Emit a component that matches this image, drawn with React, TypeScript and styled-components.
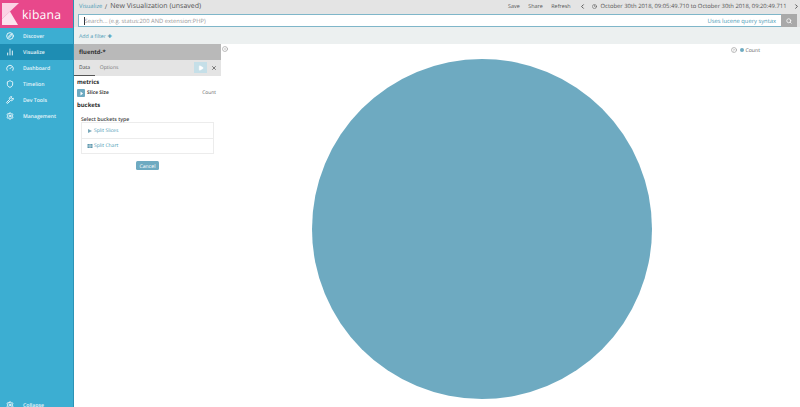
import React from "react";
import styled, { createGlobalStyle } from "styled-components";
import {
  BarChart2,
  ChevronLeft,
  ChevronRight,
  CircleChevronLeft,
  CircleChevronRight,
  Clock,
  Compass,
  Gauge,
  Play,
  Search,
  Settings,
  Shield,
  Wrench,
  X,
} from "lucide-react";

const GlobalStyle = createGlobalStyle`
  html, body {
    margin: 0;
    padding: 0;
    width: 800px;
    height: 407px;
    overflow: hidden;
    background: #fff;
    font-family: "Open Sans", "Liberation Sans", sans-serif;
    text-rendering: geometricPrecision;
  }
  * { box-sizing: border-box; }
`;

const Page = styled.div`
  display: flex;
  width: 800px;
  height: 407px;
  overflow: hidden;
`;

const Sidebar = styled.nav`
  width: 74px;
  flex: none;
  height: 407px;
  background: #3caed2;
  border-right: 1px solid #2c93b6;
  display: flex;
  flex-direction: column;
`;

const Logo = styled.div`
  height: 28px;
  background: #e8488b;
  display: flex;
  align-items: center;
  gap: 3px;
  padding-left: 1px;
  color: #fff;
  font-size: 12.2px;
  letter-spacing: 0.2px;
`;

const NavItem = styled.div<{ $active?: boolean }>`
  height: 16px;
  display: flex;
  align-items: center;
  gap: 9px;
  padding-left: 6px;
  background: ${(p) => (p.$active ? "#1e8db3" : "transparent")};
  color: #e6f5fa;
  font-size: 5.15px;
  font-weight: 600;
`;

const Collapse = styled(NavItem)`
  margin-top: auto;
  margin-bottom: -6px;
`;

const Content = styled.div`
  flex: 1;
  min-width: 0;
  display: flex;
  flex-direction: column;
`;

const TopBar = styled.div`
  height: 12px;
  background: #e4e4e4;
  display: flex;
  align-items: center;
  padding: 0 0.5px 0 5px;
  font-size: 5.4px;
  color: #555;
`;

const Crumb = styled.span`
  font-size: 5.8px;
  color: #4a9ab5;
`;

const CrumbSeparator = styled.span`
  font-size: 6.5px;
  margin: 0 3px 0 2.5px;
`;

const CrumbTitle = styled.span`
  font-size: 7px;
`;

const TopActions = styled.div`
  margin-left: auto;
  display: flex;
  align-items: center;
  gap: 8.5px;
`;

const TimeNav = styled.div`
  display: flex;
  align-items: center;
  gap: 6px;
`;

const TimeRange = styled.span`
  display: flex;
  align-items: center;
  gap: 3.5px;
  font-size: 5.85px;
`;

const SearchRow = styled.div`
  height: 15px;
  background: #e4e4e4;
  display: flex;
  align-items: flex-end;
  padding-left: 4px;
`;

const SearchBox = styled.div`
  flex: 1;
  height: 13px;
  background: #fff;
  border: 1px solid #7fb6c9;
  border-right: none;
  display: flex;
  align-items: center;
  padding: 0 5px 0 5px;
  font-size: 5.8px;
  color: #9a9a9a;
`;

const Caret = styled.span`
  width: 0.5px;
  height: 8px;
  background: #333;
`;

const SyntaxLink = styled.span`
  margin-left: auto;
  color: #4a9ab5;
`;

const SearchButton = styled.div`
  width: 16px;
  height: 13px;
  margin-right: 3px;
  background: #a9a9a9;
  display: flex;
  align-items: center;
  justify-content: center;
  color: #fff;
`;

const FilterRow = styled.div`
  height: 17px;
  background: #ecf0f0;
  display: flex;
  align-items: center;
  padding-left: 5px;
  font-size: 5.3px;
  color: #4a9ab5;
`;

const Workspace = styled.div`
  flex: 1;
  min-height: 0;
  display: flex;
`;

const Editor = styled.div`
  width: 147px;
  flex: none;
  display: flex;
  flex-direction: column;
`;

const IndexTitle = styled.div`
  height: 16px;
  background: #b9b9b9;
  display: flex;
  align-items: center;
  padding-left: 5px;
  font-size: 5.9px;
  font-weight: 700;
  color: #333;
`;

const TabBar = styled.div`
  height: 16px;
  background: #e4e4e4;
  display: flex;
  align-items: stretch;
  font-size: 5.1px;
`;

const Tab = styled.div<{ $active?: boolean }>`
  display: flex;
  align-items: center;
  padding: 0 4.5px 0 5px;
  margin-right: ${(p) => (p.$active ? "0" : "auto")};
  color: ${(p) => (p.$active ? "#444" : "#777")};
  border-bottom: ${(p) => (p.$active ? "1px solid #555" : "none")};
`;

const RunButton = styled.div`
  width: 13px;
  margin: 2px 0 3px;
  background: #c5dfe8;
  display: flex;
  align-items: center;
  justify-content: center;
  color: #fff;
`;

const DiscardButton = styled.div`
  width: 14px;
  display: flex;
  align-items: center;
  justify-content: center;
  color: #555;
`;

const SectionTitle = styled.div`
  height: 11px;
  display: flex;
  align-items: center;
  padding-left: 3px;
  font-size: 5.9px;
  font-weight: 700;
  color: #2d2d2d;
`;

const MetricRow = styled.div`
  height: 12px;
  display: flex;
  align-items: center;
  gap: 2px;
  padding: 0 5px 0 3px;
  font-size: 4.9px;
  color: #444;
`;

const MetricToggle = styled.div`
  width: 8px;
  height: 8.5px;
  border-radius: 1px;
  background: #6eaac1;
  display: flex;
  align-items: center;
  justify-content: center;
  color: #fff;
`;

const MetricName = styled.span`
  font-weight: 700;
`;

const MetricValue = styled.span`
  margin-left: auto;
  color: #666;
`;

const BucketBlock = styled.div`
  padding: 5px 7px 0 7px;
`;

const BucketLabel = styled.div`
  height: 7px;
  display: flex;
  align-items: center;
  font-size: 5.2px;
  font-weight: 600;
  color: #444;
`;

const BucketList = styled.div`
  height: 32px;
  border: 1px solid #ececec;
`;

const BucketOption = styled.div`
  height: 15px;
  display: flex;
  align-items: center;
  gap: 0;
  padding-left: 5px;
  font-size: 5px;
  color: #4a9ab5;
  & + & {
    border-top: 1px solid #ececec;
  }
`;

const CancelRow = styled.div`
  display: flex;
  justify-content: center;
  margin-top: 7px;
`;

const CancelButton = styled.div`
  width: 23px;
  height: 9px;
  border-radius: 1.5px;
  background: #6eaac1;
  color: #fff;
  font-size: 5.2px;
  display: flex;
  align-items: center;
  justify-content: center;
`;

const ChartArea = styled.div`
  flex: 1;
  min-width: 0;
  position: relative;
  padding: 15px 0 0 91px;
`;

const CollapseToggle = styled.div`
  position: absolute;
  left: 1px;
  top: 2px;
  color: #999;
  display: flex;
`;

const Legend = styled.div`
  position: absolute;
  right: 40px;
  top: 2px;
  display: flex;
  align-items: center;
  gap: 1px;
  font-size: 5.2px;
  color: #666;
`;

const LegendToggle = styled.span`
  display: flex;
  margin-right: 2px;
  color: #999;
`;

const LegendDot = styled.span`
  width: 4px;
  height: 4px;
  border-radius: 50%;
  background: #6eaac1;
`;

const PieSvg = styled.svg`
  display: block;
`;

const ArrowIcon = () => (
  <svg width="5" height="5" viewBox="0 0 10 10">
    <path d="M3 1l5 4-5 4z" fill="currentColor" />
  </svg>
);

const KibanaMark = () => (
  <svg width="18" height="22" viewBox="0 0 18 22">
    <path d="M1 0h17L1 16z" fill="#fbd3e4" />
    <path d="M1 16L9 8.5l8 13.5H1z" fill="#fff" opacity="0.85" />
  </svg>
);

const SlicesIcon = () => (
  <svg width="7" height="6" viewBox="0 0 7 6">
    <path d="M1 1l4 2-4 2z" fill="#7aa9bb" />
  </svg>
);

const ChartIcon = () => (
  <svg width="7" height="6" viewBox="0 0 7 6">
    <path d="M0.5 1h5v4h-5z" fill="#5e98ae" />
    <path d="M0.5 3h5M3 1v4" stroke="#fff" strokeWidth="0.5" />
  </svg>
);

const navItems = [
  { label: "Discover", icon: Compass },
  { label: "Visualize", icon: BarChart2, active: true },
  { label: "Dashboard", icon: Gauge },
  { label: "Timelion", icon: Shield },
  { label: "Dev Tools", icon: Wrench },
  { label: "Management", icon: Settings },
];

export default function App() {
  return (
    <Page>
      <GlobalStyle />
      <Sidebar>
        <Logo>
          <KibanaMark />
          kibana
        </Logo>
        {navItems.map((item) => (
          <NavItem key={item.label} $active={item.active}>
            <item.icon size={8} strokeWidth={2.6} color="#fff" />
            {item.label}
          </NavItem>
        ))}
        <Collapse>
          <Settings size={8} strokeWidth={2.6} color="#fff" />
          Collapse
        </Collapse>
      </Sidebar>
      <Content>
        <TopBar>
          <Crumb>Visualize</Crumb>
          <CrumbSeparator>/</CrumbSeparator>
          <CrumbTitle>New Visualization (unsaved)</CrumbTitle>
          <TopActions>
            <span>Save</span>
            <span>Share</span>
            <span>Refresh</span>
            <TimeNav>
              <ChevronLeft size={7} strokeWidth={3} color="#444" />
              <TimeRange>
                <Clock size={5} strokeWidth={2.5} />
                October 30th 2018, 09:05:49.710 to October 30th 2018, 09:20:49.711
              </TimeRange>
              <ChevronRight size={7} strokeWidth={3} color="#444" />
            </TimeNav>
          </TopActions>
        </TopBar>
        <SearchRow>
          <SearchBox>
            <Caret />
            <span>Search... (e.g. status:200 AND extension:PHP)</span>
            <SyntaxLink>Uses lucene query syntax</SyntaxLink>
          </SearchBox>
          <SearchButton>
            <Search size={6} strokeWidth={3} />
          </SearchButton>
        </SearchRow>
        <FilterRow>Add a filter ✚</FilterRow>
        <Workspace>
          <Editor>
            <IndexTitle>fluentd-*</IndexTitle>
            <TabBar>
              <Tab $active>Data</Tab>
              <Tab>Options</Tab>
              <RunButton>
                <Play size={6} fill="#fff" />
              </RunButton>
              <DiscardButton>
                <X size={6} strokeWidth={3} />
              </DiscardButton>
            </TabBar>
            <SectionTitle>metrics</SectionTitle>
            <MetricRow>
              <MetricToggle>
                <ArrowIcon />
              </MetricToggle>
              <MetricName>Slice Size</MetricName>
              <MetricValue>Count</MetricValue>
            </MetricRow>
            <SectionTitle>buckets</SectionTitle>
            <BucketBlock>
              <BucketLabel>Select buckets type</BucketLabel>
              <BucketList>
                <BucketOption>
                  <SlicesIcon />
                  Split Slices
                </BucketOption>
                <BucketOption>
                  <ChartIcon />
                  Split Chart
                </BucketOption>
              </BucketList>
              <CancelRow>
                <CancelButton>Cancel</CancelButton>
              </CancelRow>
            </BucketBlock>
          </Editor>
          <ChartArea>
            <CollapseToggle>
              <CircleChevronLeft size={6} strokeWidth={2.5} />
            </CollapseToggle>
            <Legend>
              <LegendToggle>
                <CircleChevronRight size={6} strokeWidth={2.5} />
              </LegendToggle>
              <LegendDot />
              Count
            </Legend>
            <PieSvg width="340" height="340" viewBox="0 0 340 340">
              <circle cx="170" cy="170" r="170" fill="#6eaac1" />
            </PieSvg>
          </ChartArea>
        </Workspace>
      </Content>
    </Page>
  );
}
